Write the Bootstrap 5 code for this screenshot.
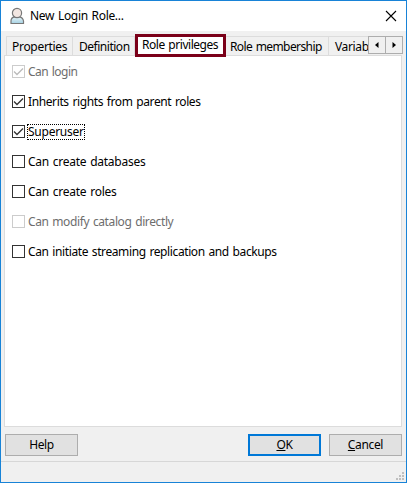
<!DOCTYPE html>
<html lang="en"><head><meta charset="utf-8"><title>New Login Role</title>
<link href="https://cdn.jsdelivr.net/npm/bootstrap@5.3.0/dist/css/bootstrap.min.css" rel="stylesheet">
<style>
body{font:12px/16px "Noto Sans","Open Sans",sans-serif;color:#000;overflow:hidden}
.dialog{width:407px;height:483px;border:1px solid #1883d7;background:#f0f0f0;word-spacing:1px}
.titlebar{height:30px;padding:0 9px 0 8px}
.title-text{font-size:12px;margin-left:5px;letter-spacing:-.32px}
.tabs{height:24px;margin:0 4px 0 5px;padding-top:5px}
.tabs .nav-link{height:19px;padding:2px 0 0 5px;border:1px solid #dcdcdc;border-width:1px 1px 0 0;color:#000;line-height:16px;white-space:nowrap;flex:none;border-radius:0}
.tabs .nav-link:first-child{border-left-width:1px;letter-spacing:-.3px}
.tabs .nav-link.active{height:23px;margin-top:-2px;border:3px solid #7b0019;background:#fff;padding:0 0 0 4px;z-index:2;position:relative;letter-spacing:-.47px}
.w1{width:67px}.w2{width:62px;letter-spacing:-.48px}.w3{width:91px}.w4{width:103px;letter-spacing:-.6px}.w5{width:39px;letter-spacing:-.35px}
.tabs .w2{padding-left:6px}.tabs .w4{padding-left:4px}
.tabs .w5{border-right:0;padding-left:6px}
.arrow{width:18px;height:18px;border:1px solid #adadad;background:#f0f0f0;padding:0;border-radius:0}
.arrow+.arrow{margin-left:-1px}
.pane{height:372px;margin:0 4px 0 3px;border:1px solid #dcdcdc;background:#fff;padding:8px 7px}
.option{height:30px;min-height:0;padding:0;margin:0}
.form-check .form-check-input{width:13px;height:13px;margin:1px 2px 0 0;border:1px solid #333;border-radius:0;float:none;background-color:#fff;background-size:13px;box-shadow:none;flex:none}
.form-check .form-check-input:checked{background-color:#fff;background-image:url("data:image/svg+xml,%3Csvg xmlns='http://www.w3.org/2000/svg' viewBox='0 0 13 13'%3E%3Cpath d='M2 6.5 5 9.5 11 3.5' fill='none' stroke='%23333' stroke-width='1.3'/%3E%3C/svg%3E");background-size:13px}
.form-check .form-check-input:disabled{border-color:#ccc;opacity:1}
.form-check .form-check-input:disabled:checked{background-image:url("data:image/svg+xml,%3Csvg xmlns='http://www.w3.org/2000/svg' viewBox='0 0 13 13'%3E%3Cpath d='M2 6.5 5 9.5 11 3.5' fill='none' stroke='%23bbb' stroke-width='1.3'/%3E%3C/svg%3E")}
.form-check .form-check-input:disabled~.form-check-label{color:#6d6d6d;opacity:1}
.form-check-label{height:16px;padding:0 1px;white-space:nowrap;letter-spacing:-.39px}
label[for=a]{letter-spacing:-.52px}
label[for=c]{letter-spacing:-.25px}
label[for=d],label[for=e]{letter-spacing:-.26px}
.focused{outline:1px dotted #000;outline-offset:-1px}
.actions{height:34px;padding:7px 4px 0}
.actions .btn{width:73px;height:22px;border:1px solid #adadad;background:#e1e1e1;color:#000;font-size:12px;line-height:20px;padding:0;border-radius:0;letter-spacing:-.35px}
.actions .btn.ok{border:2px solid #0078d7;line-height:18px;margin-right:8px}
.status{border-top:1px solid #d7d7d7;padding:0 2px 2px 0}
</style></head><body>
<main class="dialog d-flex flex-column">
<header class="titlebar bg-white d-flex align-items-center">
<svg width="16" height="18" viewBox="0 0 16 18"><defs><linearGradient id="g" x2="0" y2="1"><stop stop-color="#e8f3f7"/><stop offset="1" stop-color="#a5d2e4"/></linearGradient></defs><path d="M2 16.5V14Q2 10.5 5.5 9.8H10.5Q14 10.5 14.5 14V16.5Z" fill="url(#g)" stroke="#777" stroke-width="1.2"/><circle cx="8" cy="6" r="4.6" fill="#f3e6e1" stroke="#777" stroke-width="1.2"/></svg>
<span class="title-text">New Login Role...</span>
<svg class="ms-auto" width="12" height="12" viewBox="0 0 12 12"><path d="M1 1 11 11M11 1 1 11" stroke="#000" stroke-width="1.1"/></svg>
</header>
<nav class="tabs nav flex-nowrap align-items-start">
<a class="nav-link w1"><span>Properties</span></a><a class="nav-link w2"><span>Definition</span></a><a class="nav-link active w3"><span>Role privileges</span></a><a class="nav-link w4"><span>Role membership</span></a><a class="nav-link w5"><span>Variab</span></a>
<button class="arrow d-flex align-items-center justify-content-center flex-shrink-0" aria-label="Previous"><svg width="8" height="8"><path d="M5.5 1V7L2 4Z"/></svg></button><button class="arrow d-flex align-items-center justify-content-center flex-shrink-0" aria-label="Next"><svg width="8" height="8"><path d="M2.5 1V7L6 4Z"/></svg></button>
</nav>
<section class="pane">
<div class="form-check option d-flex"><input class="form-check-input" type="checkbox" id="a" checked disabled><label class="form-check-label" for="a">Can login</label></div>
<div class="form-check option d-flex"><input class="form-check-input" type="checkbox" id="b" checked><label class="form-check-label" for="b">Inherits rights from parent roles</label></div>
<div class="form-check option d-flex"><input class="form-check-input" type="checkbox" id="c" checked><label class="form-check-label focused" for="c">Superuser</label></div>
<div class="form-check option d-flex"><input class="form-check-input" type="checkbox" id="d"><label class="form-check-label" for="d">Can create databases</label></div>
<div class="form-check option d-flex"><input class="form-check-input" type="checkbox" id="e"><label class="form-check-label" for="e">Can create roles</label></div>
<div class="form-check option d-flex"><input class="form-check-input" type="checkbox" id="f" disabled><label class="form-check-label" for="f">Can modify catalog directly</label></div>
<div class="form-check option d-flex"><input class="form-check-input" type="checkbox" id="h"><label class="form-check-label" for="h">Can initiate streaming replication and backups</label></div>
</section>
<div class="actions d-flex"><button class="btn">Help</button><button class="btn ok ms-auto"><u>O</u>K</button><button class="btn"><u>C</u>ancel</button></div>
<footer class="status flex-grow-1 d-flex justify-content-end align-items-end"><svg width="8" height="8" fill="#bfbfbf"><path d="M6 0h2v2H6zM3 3h2v2H3zM6 3h2v2H6zM0 6h2v2H0zM3 6h2v2H3zM6 6h2v2H6z"/></svg></footer>
</main>
<script src="https://cdn.jsdelivr.net/npm/bootstrap@5.3.0/dist/js/bootstrap.bundle.min.js"></script>
</body></html>
